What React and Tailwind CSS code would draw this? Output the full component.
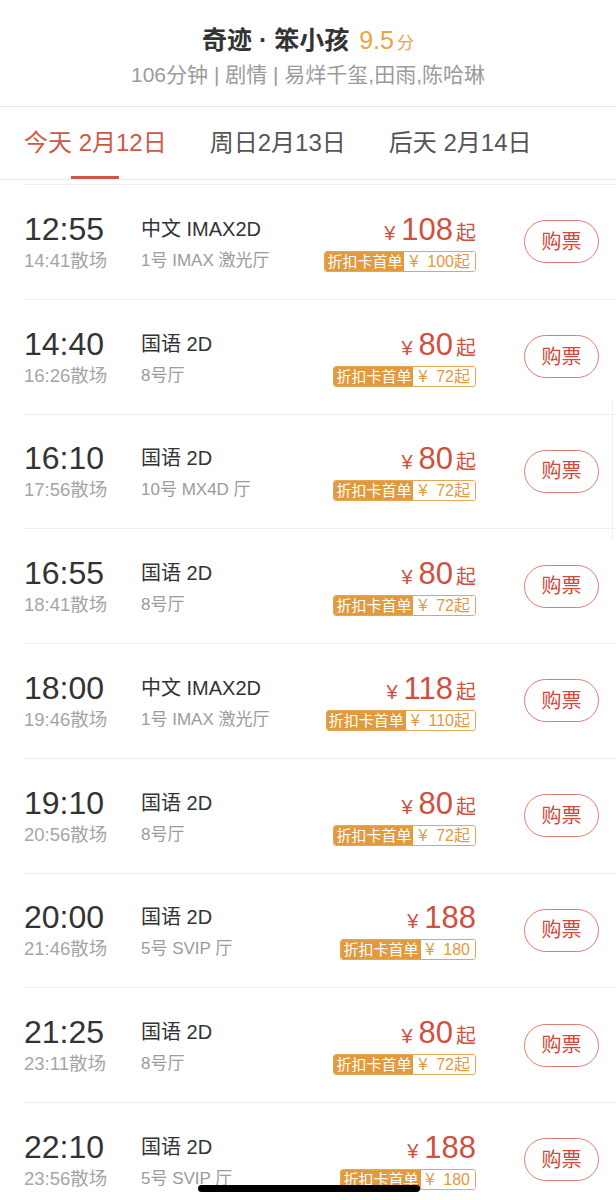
import React from "react";

const SHOWS = [
  { start: "12:55", end: "14:41", type: "中文 IMAX2D", hall: "1号 IMAX 激光厅", price: "108", from: true, deal: "100" },
  { start: "14:40", end: "16:26", type: "国语 2D", hall: "8号厅", price: "80", from: true, deal: "72" },
  { start: "16:10", end: "17:56", type: "国语 2D", hall: "10号 MX4D 厅", price: "80", from: true, deal: "72" },
  { start: "16:55", end: "18:41", type: "国语 2D", hall: "8号厅", price: "80", from: true, deal: "72" },
  { start: "18:00", end: "19:46", type: "中文 IMAX2D", hall: "1号 IMAX 激光厅", price: "118", from: true, deal: "110" },
  { start: "19:10", end: "20:56", type: "国语 2D", hall: "8号厅", price: "80", from: true, deal: "72" },
  { start: "20:00", end: "21:46", type: "国语 2D", hall: "5号 SVIP 厅", price: "188", from: false, deal: "180" },
  { start: "21:25", end: "23:11", type: "国语 2D", hall: "8号厅", price: "80", from: true, deal: "72" },
  { start: "22:10", end: "23:56", type: "国语 2D", hall: "5号 SVIP 厅", price: "188", from: false, deal: "180" },
];

const TABS = ["今天 2月12日", "周日2月13日", "后天 2月14日"];

const Header = () => (
  <div className="h-[107px] pt-[24px] border-b border-[#e6e6e6] text-center">
    <div className="h-[32px] leading-[32px]">
      <span className="text-[25px] font-bold text-[#333]">奇迹 · 笨小孩</span>
      <span className="ml-[10px] text-[25px] text-[#e9a541]">9.5</span>
      <span className="ml-[3px] text-[17px] text-[#e9a541]">分</span>
    </div>
    <div className="mt-[5px] h-[28px] text-[21px] leading-[28px] text-[#9b9b9b]">
      106分钟 | 剧情 | 易烊千玺,田雨,陈哈琳
    </div>
  </div>
);

const Tabs = () => (
  <div className="flex gap-[43px] px-[24px] h-[73px] border-b border-[#ececec]">
    {TABS.map((tab, i) => (
      <div key={tab} className="relative flex items-center">
        <span className={`text-[24px] leading-[30px] ${i === 0 ? "text-[#cf5745]" : "text-[#555]"}`}>{tab}</span>
        {i === 0 && (
          <div className="absolute bottom-0 left-1/2 -translate-x-1/2 w-[48px] h-[3px] bg-[#cf5745]" />
        )}
      </div>
    ))}
  </div>
);

const Price = ({ show }) => (
  <div className="flex flex-col items-end">
    <div className="h-[36px] leading-[36px] text-[#d0503e] whitespace-nowrap">
      <span className="text-[20px]">¥</span>
      <span className="ml-[6px] text-[31px]">{show.price}</span>
      {show.from && <span className="ml-[3px] text-[20px]">起</span>}
    </div>
    <div className="mt-[3px] flex h-[21px] rounded-[3px] border border-[#e7a654] overflow-hidden leading-[19px] whitespace-nowrap">
      <span className="bg-[#e29a3f] text-white text-[15px] px-[2px]">折扣卡首单</span>
      <span className="bg-white text-[#e29a3f] text-[16px] px-[5px]">
        ¥&nbsp;&nbsp;{show.deal}{show.from ? "起" : ""}
      </span>
    </div>
  </div>
);

const ShowRow = ({ show }) => (
  <div className="flex items-center h-[114.75px] border-t border-[#eeeeee] pr-[17px]">
    <div className="w-[117px] shrink-0">
      <div className="h-[36px] text-[32px] leading-[36px] text-[#333]">{show.start}</div>
      <div className="mt-[2px] h-[24px] text-[18.5px] leading-[24px] text-[#a6a6a6]">{show.end}散场</div>
    </div>
    <div className="flex-1">
      <div className="h-[36px] text-[20px] leading-[36px] text-[#333]">{show.type}</div>
      <div className="mt-[2px] h-[24px] text-[17px] leading-[24px] text-[#9b9b9b]">{show.hall}</div>
    </div>
    <Price show={show} />
    <button className="ml-[48px] w-[75px] h-[43px] rounded-full border-[1.5px] border-[#dc7d72] text-[20px] text-[#cc4b3b] bg-white">
      购票
    </button>
  </div>
);

export default function App() {
  return (
    <div className="relative h-[1200px] overflow-hidden bg-white font-['Liberation_Sans','Noto_Sans_CJK_SC',sans-serif]">
      <Header />
      <Tabs />
      <div className="mt-[4px] pl-[24px]">
        {SHOWS.map((show) => (
          <ShowRow key={show.start} show={show} />
        ))}
      </div>
      <div className="absolute right-[3px] top-[400px] w-[1px] h-[140px] bg-[#f0f0f0]" />
      <div className="absolute left-[198px] top-[1185px] w-[222px] h-[7px] rounded-full bg-black" />
    </div>
  );
}
